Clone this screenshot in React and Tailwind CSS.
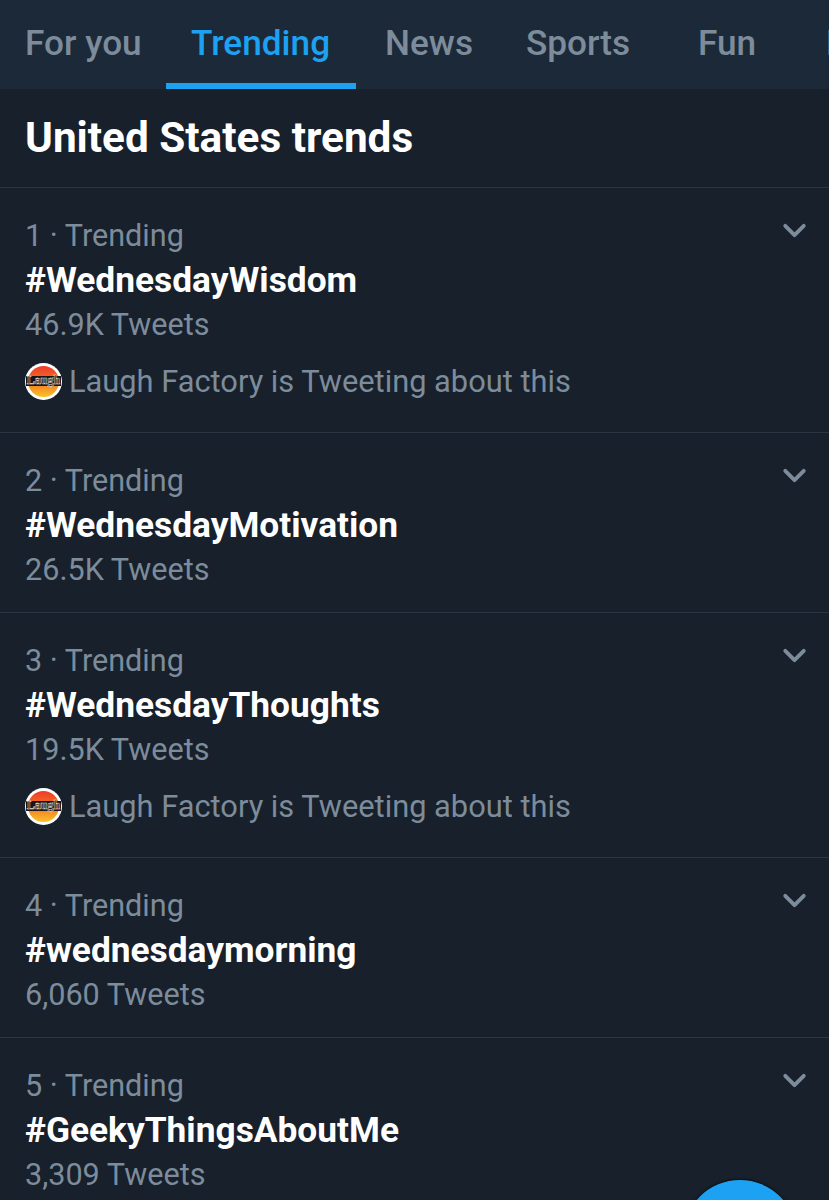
import { ChevronDown } from 'lucide-react'

const tabs = [
  { label: 'For you', cls: 'w-[166px] pl-[25px]' },
  { label: 'Trending', cls: 'w-[190px] pl-[25px]', active: true },
  { label: 'News', cls: 'w-[142px] pl-[29px]' },
  { label: 'Sports', cls: 'w-[172px] pl-[28px]' },
  { label: 'Fun', cls: 'w-[128px] pl-[28px]' },
  { label: 'Entertainment', cls: 'pl-[28px]' },
]

const trends = [
  { rank: 1, tag: '#WednesdayWisdom', count: '46.9K Tweets', laugh: true },
  { rank: 2, tag: '#WednesdayMotivation', count: '26.5K Tweets' },
  { rank: 3, tag: '#WednesdayThoughts', count: '19.5K Tweets', laugh: true },
  { rank: 4, tag: '#wednesdaymorning', count: '6,060 Tweets' },
  { rank: 5, tag: '#GeekyThingsAboutMe', count: '3,309 Tweets' },
]

function LaughAvatar() {
  return (
    <svg width="37" height="37" viewBox="0 0 37 37" className="shrink-0 -mt-[2px]">
      <defs>
        <linearGradient id="laugh-fill" x1="0" y1="0" x2="0" y2="1">
          <stop offset="0" stopColor="#ee3b2c" />
          <stop offset="0.55" stopColor="#f47a1f" />
          <stop offset="1" stopColor="#f9c22a" />
        </linearGradient>
      </defs>
      <circle cx="18.5" cy="18.5" r="18.5" fill="#fff" />
      <circle cx="18.5" cy="18.5" r="15.5" fill="url(#laugh-fill)" />
      <rect x="1" y="13" width="35" height="10" fill="#17141a" />
      <text
        x="18.5"
        y="21"
        textAnchor="middle"
        fontFamily="'Liberation Serif', serif"
        fontWeight="700"
        fontSize="12"
        fill="#17141a"
        stroke="#e8e2d8"
        strokeWidth="0.5"
      >
        Laugh
      </text>
    </svg>
  )
}

function TrendRow({ rank, tag, count, laugh }) {
  return (
    <div className={`relative border-b border-[#2a3642] pl-[25px] pt-[25px] ${laugh ? 'pb-[28px]' : 'pb-[20px]'}`}>
      <ChevronDown size={37} strokeWidth={2.5} className="absolute right-[16px] top-[24px] text-[#7d8c9b]" />
      <p className="text-[30.6px] leading-[45px] text-[#7d8c9b]">{rank} · Trending</p>
      <p className="text-[35.3px] leading-[45px] font-bold text-white">{tag}</p>
      <p className="text-[30.6px] leading-[44px] text-[#7d8c9b]">{count}</p>
      {laugh && (
        <div className="flex items-center gap-[7px] mt-[13px] h-[44px]">
          <LaughAvatar />
          <span className="text-[30.8px] text-[#7d8c9b]">Laugh Factory is Tweeting about this</span>
        </div>
      )}
    </div>
  )
}

export default function App() {
  return (
    <div className="relative h-[1200px] w-[829px] overflow-hidden bg-[#17202b] font-['Roboto',sans-serif]">
      {/* Tabs */}
      <div className="flex h-[89px] overflow-hidden bg-[#1c2938]">
        {tabs.map((t) => (
          <div
            key={t.label}
            className={`shrink-0 h-full pt-[19px] text-[35.2px] leading-[48px] font-medium whitespace-nowrap ${t.cls} ${
              t.active ? 'text-[#1da1f2] border-b-[6px] border-[#1da1f2]' : 'text-[#7d8c9b]'
            }`}
          >
            {t.label}
          </div>
        ))}
      </div>

      <div className="h-[99px] border-b border-[#2a3642] pl-[25px] pt-[24px]">
        <h1 className="text-[42.3px] leading-[50px] font-bold text-white">United States trends</h1>
      </div>

      {trends.map((t) => (
        <TrendRow key={t.rank} {...t} />
      ))}

      {/* Compose button */}
      <div className="absolute left-[683px] top-[1180px] w-[114px] h-[114px] rounded-full bg-[#1da1f2] shadow-[0_-1px_2px_rgba(0,0,0,0.6)]" />
    </div>
  )
}
